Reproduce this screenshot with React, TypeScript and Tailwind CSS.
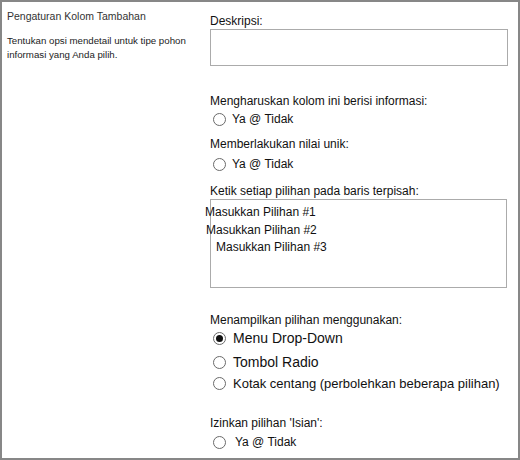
const font = { fontFamily: '"Liberation Sans", Arial, sans-serif' };

function Radio({ checked = false }: { checked?: boolean }) {
  return (
    <span className="inline-flex h-[13px] w-[13px] shrink-0 items-center justify-center rounded-full border border-[#6a6a6a] bg-white">
      {checked && <span className="h-[7px] w-[7px] rounded-full bg-[#111]" />}
    </span>
  );
}

function Option({ label, checked, size, gap = 'gap-[6px]' }: { label: string; checked?: boolean; size: string; gap?: string }) {
  return (
    <div className={`flex items-center ${gap} pl-[3px] text-[#111] ${size}`}>
      <Radio checked={checked} />
      <span>{label}</span>
    </div>
  );
}

export default function App() {
  return (
    <div
      className="flex h-[460px] w-[520px] border-2 border-[#878787] bg-white text-[#111]"
      style={font}
    >
      <div className="w-[208px] shrink-0 pl-[5px] pt-[6px]">
        <h2 className="text-[10.5px] leading-[16px] text-[#333]">Pengaturan Kolom Tambahan</h2>
        <p className="mt-[10px] w-[195px] text-[9.7px] leading-[14px] text-[#222]">
          Tentukan opsi mendetail untuk tipe pohon informasi yang Anda pilih.
        </p>
      </div>

      <div className="flex-1 pr-[10px] pt-[11px]">
        <label className="block text-[12px] leading-[16px]">Deskripsi:</label>
        <div className="h-[37px] w-[298px] border border-[#ababab] bg-white" />

        <div className="mt-[27px] text-[12px] leading-[16px]">Mengharuskan kolom ini berisi informasi:</div>
        <div className="mt-[2px] leading-[16px]">
          <Option label="Ya @ Tidak" size="text-[12px]" />
        </div>

        <div className="mt-[9px] text-[12px] leading-[16px]">Memberlakukan nilai unik:</div>
        <div className="mt-[4px] leading-[16px]">
          <Option label="Ya @ Tidak" size="text-[12px]" />
        </div>

        <div className="mt-[11px] text-[12px] leading-[16px]">Ketik setiap pilihan pada baris terpisah:</div>
        <div className="h-[89px] w-[297px] border border-[#ababab] bg-white pt-[4px] text-[12px] leading-[17.5px]">
          <div className="-ml-[6px]">Masukkan Pilihan #1</div>
          <div className="-ml-[5px]">Masukkan Pilihan #2</div>
          <div className="ml-[5px]">Masukkan Pilihan #3</div>
        </div>

        <div className="mt-[24px] text-[12px] leading-[16px]">Menampilkan pilihan menggunakan:</div>
        <div className="flex flex-col">
          <div className="leading-[21px]">
            <Option label="Menu Drop-Down" checked size="text-[14px]" gap="gap-[7px]" />
          </div>
          <div className="mt-[3px] leading-[21px]">
            <Option label="Tombol Radio" size="text-[14px]" gap="gap-[7px]" />
          </div>
          <div className="mt-[1px] leading-[19px]">
            <Option label="Kotak centang (perbolehkan beberapa pilihan)" size="text-[13px]" gap="gap-[7px]" />
          </div>
        </div>

        <div className="mt-[22px] text-[12px] leading-[16px]">Izinkan pilihan 'Isian':</div>
        <div className="mt-[3px] leading-[16px]">
          <Option label="Ya @ Tidak" size="text-[12px]" gap="gap-[9px]" />
        </div>
      </div>
    </div>
  );
}
